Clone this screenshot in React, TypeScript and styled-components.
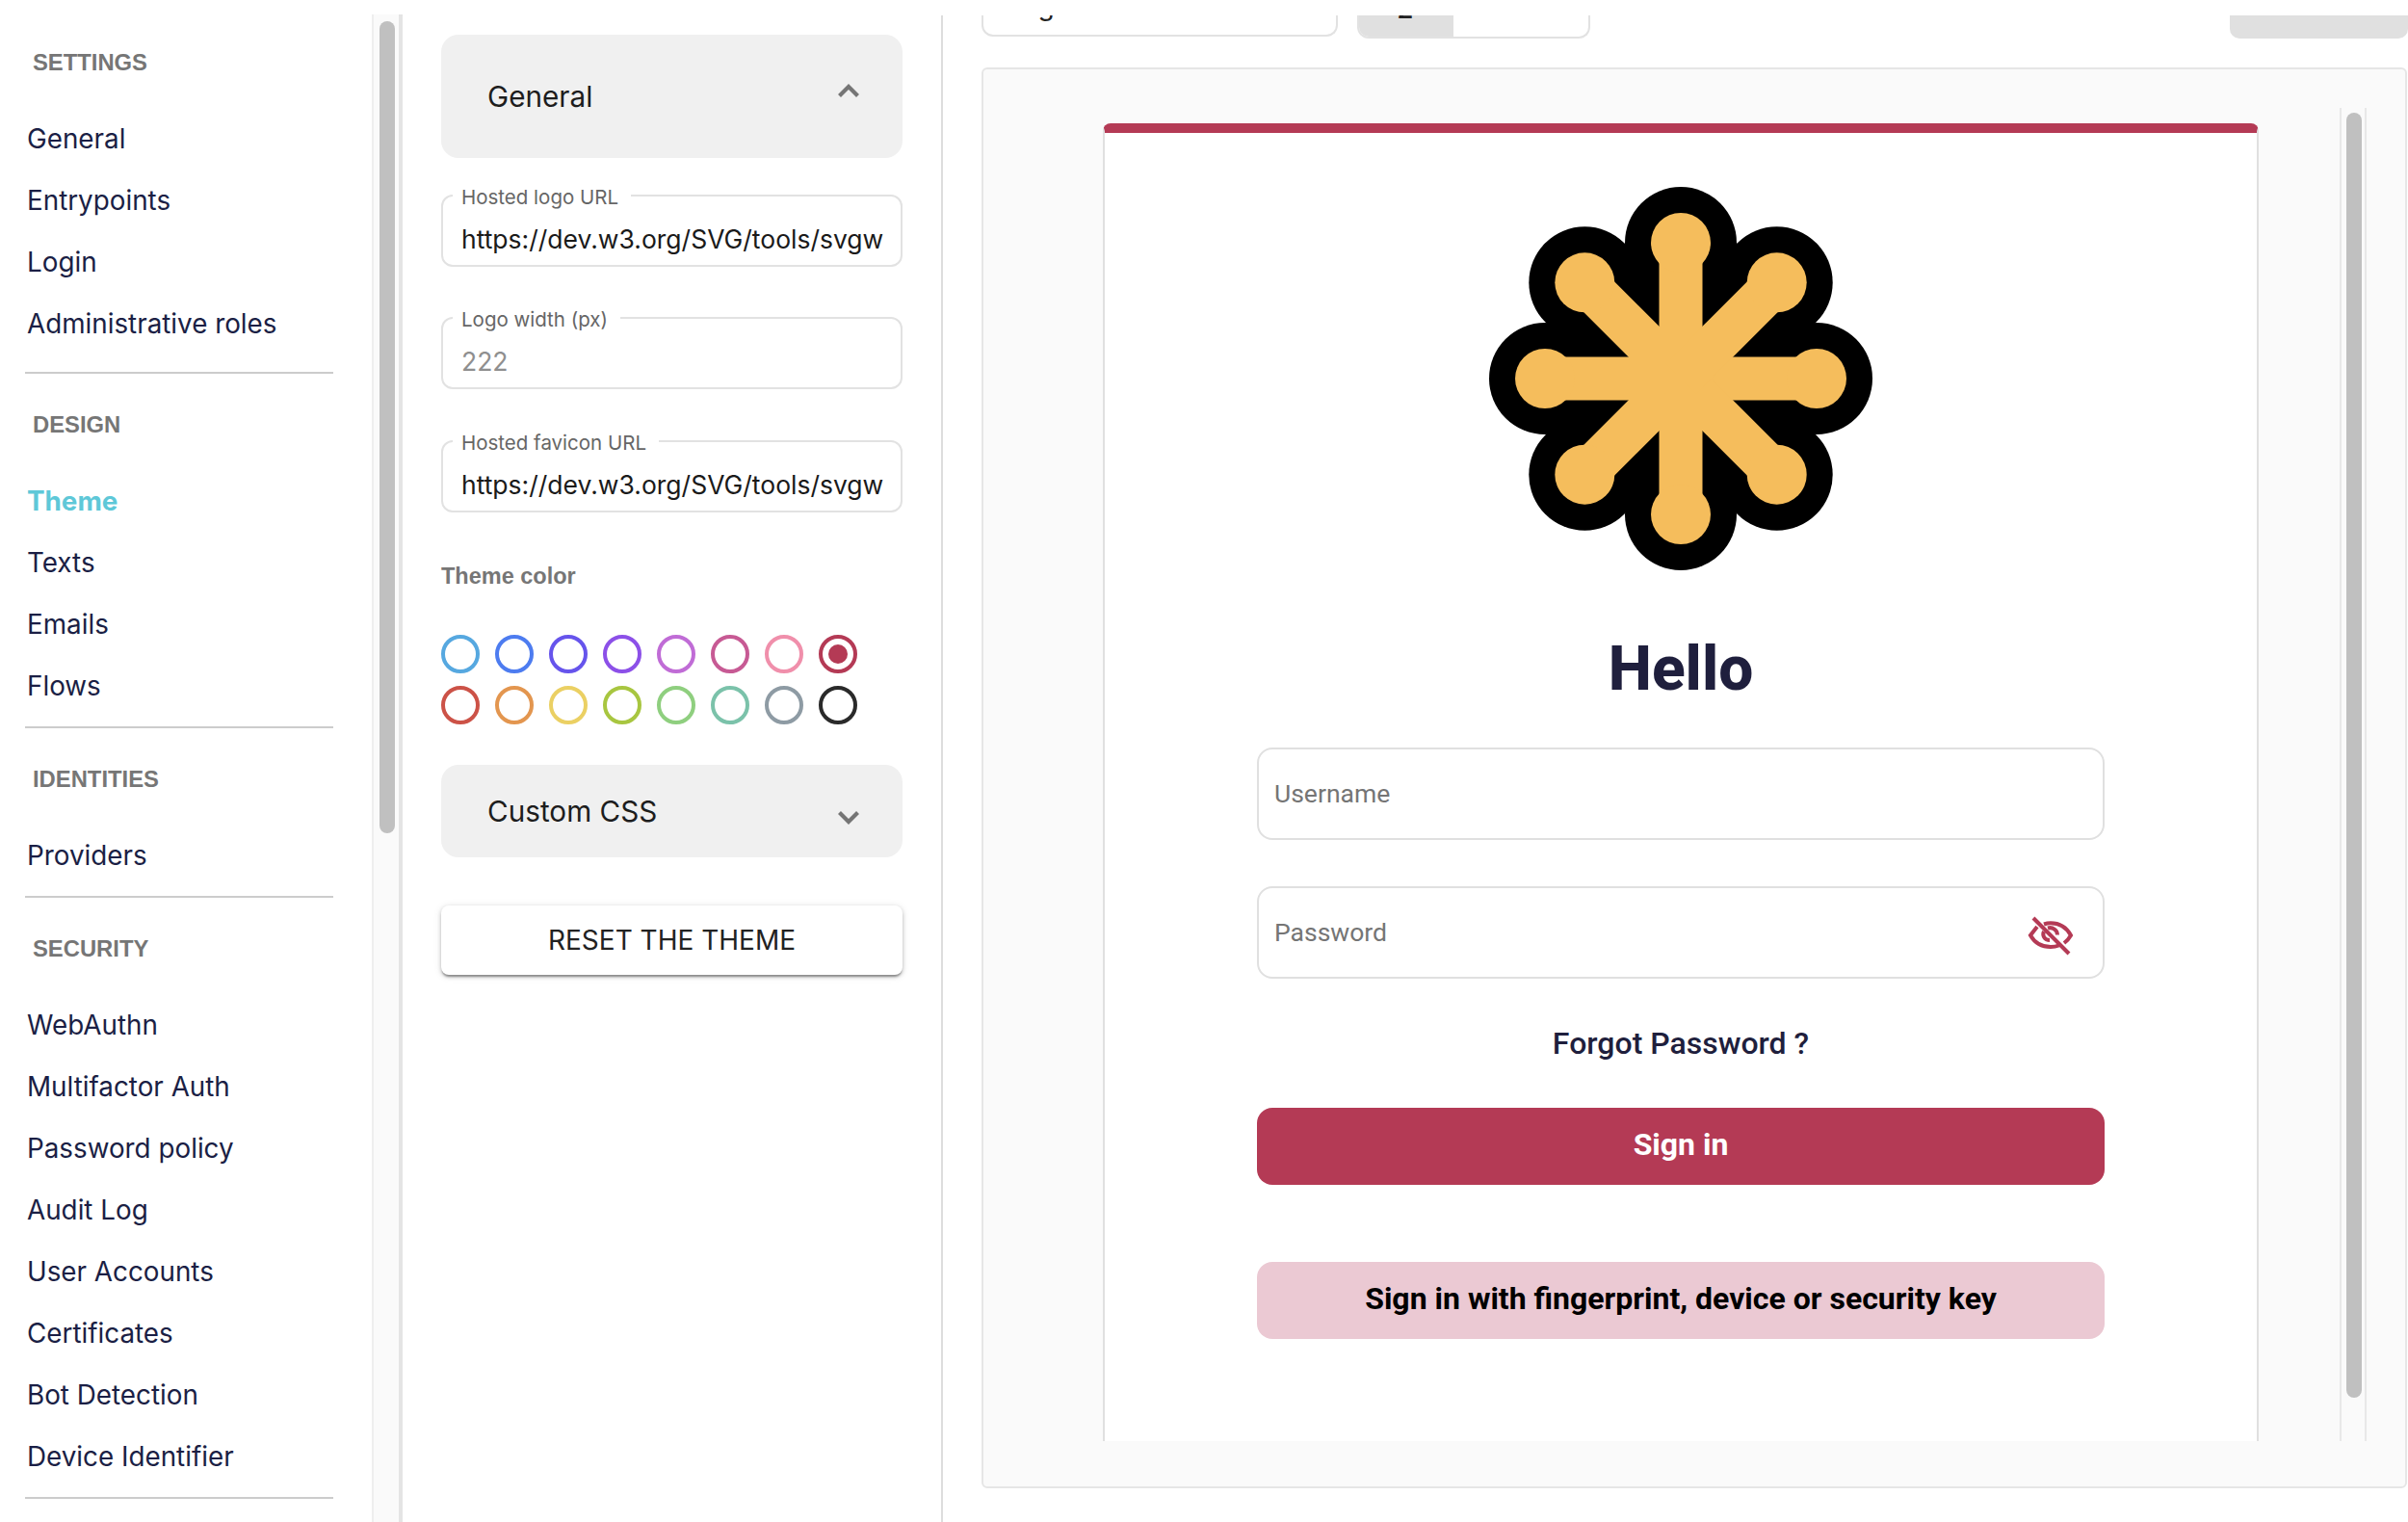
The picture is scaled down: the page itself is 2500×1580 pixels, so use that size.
import React from "react";
import styled, { createGlobalStyle } from "styled-components";

const Global = createGlobalStyle`
  html, body { margin: 0; padding: 0; background: #fff; }
  body { font-family: Inter, "Liberation Sans", sans-serif; }
  * { box-sizing: border-box; }
`;

const Page = styled.div`
  width: 2500px;
  height: 1580px;
  display: flex;
  overflow: hidden;
  background: #fff;
`;

const Sidebar = styled.aside`
  width: 418px;
  flex: none;
  display: flex;
`;

const Nav = styled.nav`
  width: 386px;
  flex: none;
  padding: 12px 40px 0 26px;
`;

const Section = styled.section<{ $pb: number }>`
  padding-bottom: ${(p) => p.$pb}px;
  border-bottom: 2px solid #ccc;
`;

const SectionTitle = styled.h3`
  margin: 33px 0 27px 8px;
  height: 40px;
  line-height: 40px;
  font-family: "Liberation Sans", Arial, sans-serif;
  font-weight: 700;
  font-size: 23.8px;
  color: #767676;
`;

const NavItem = styled.a<{ $active?: boolean }>`
  display: block;
  height: 64px;
  line-height: 64px;
  margin-left: 2px;
  font-size: 27.8px;
  font-weight: ${(p) => (p.$active ? 700 : 400)};
  color: ${(p) => (p.$active ? "#5ec8d8" : "#1b1f45")};
  white-space: nowrap;
`;

const Rail = styled.div`
  width: 32px;
  margin-top: 15px;
  flex: none;
  background: #fafafa;
  border-left: 2px solid #eee;
  border-right: 4px solid #e4e4e4;
  padding: 7px 0 0 6px;
`;

const RailThumb = styled.div`
  width: 16px;
  height: 843px;
  border-radius: 8px;
  background: #c0c0c0;
`;

const Controls = styled.div`
  width: 561px;
  flex: none;
  margin-top: 16px;
  padding: 20px 40px 0 40px;
  border-right: 2px solid #ddd;
  display: flex;
  flex-direction: column;
  align-items: stretch;
`;

const Accordion = styled.div<{ $h: number; $top?: number }>`
  height: ${(p) => p.$h}px;
  margin-top: ${(p) => p.$top ?? 0}px;
  flex: none;
  padding: 0 44px 0 48px;
  border-radius: 18px;
  background: #f0f0f0;
  display: flex;
  align-items: center;
  justify-content: space-between;
`;

const AccordionTitle = styled.span`
  font-size: 29.7px;
  color: #1d1d1d;
`;

const Chevron = styled.svg<{ $shift: number }>`
  width: 24px;
  height: 16px;
  transform: translateY(${(p) => p.$shift}px);
`;

const Field = styled.div<{ $top: number }>`
  position: relative;
  height: 75px;
  margin-top: ${(p) => p.$top}px;
  flex: none;
  padding: 0 10px 10px 19px;
  border: 2px solid #e2e2e2;
  border-radius: 12px;
  display: flex;
  align-items: flex-end;
`;

const FieldLabel = styled.label`
  position: absolute;
  top: -13px;
  left: 10px;
  padding: 0 13px 0 9px;
  background: #fff;
  font-size: 20.5px;
  line-height: 28px;
  color: #666;
  white-space: nowrap;
`;

const FieldValue = styled.div<{ $muted?: boolean }>`
  height: 34px;
  line-height: 34px;
  white-space: nowrap;
  font-size: 26.5px;
  color: ${(p) => (p.$muted ? "#8f8f8f" : "#1a1a1a")};
`;

const ThemeLabel = styled.div`
  margin-top: 51px;
  height: 30px;
  line-height: 30px;
  font-family: "Liberation Sans", Arial, sans-serif;
  font-size: 23.5px;
  font-weight: 700;
  color: #767676;
`;

const Swatches = styled.div`
  margin-top: 46px;
  display: grid;
  grid-template-columns: repeat(8, 40px);
  column-gap: 16px;
  row-gap: 13px;
`;

const Swatch = styled.span<{ $color: string }>`
  width: 40px;
  height: 40px;
  border: 4px solid ${(p) => p.$color};
  border-radius: 50%;
  display: flex;
  align-items: center;
  justify-content: center;
`;

const SwatchDot = styled.span<{ $color: string }>`
  width: 20px;
  height: 20px;
  border-radius: 50%;
  background: ${(p) => p.$color};
`;

const ResetButton = styled.button`
  margin-top: 50px;
  height: 72px;
  flex: none;
  border: 0;
  border-radius: 8px;
  background: #fff;
  font-family: inherit;
  font-size: 28px;
  color: #222;
  box-shadow: 0 3px 2px -1px rgba(0, 0, 0, 0.32), 0 2px 4px rgba(0, 0, 0, 0.2), 0 1px 8px rgba(0, 0, 0, 0.1);
`;

const Main = styled.main`
  flex: 1;
  min-width: 0;
  padding-left: 40px;
  display: flex;
  flex-direction: column;
`;

const Toolbar = styled.div`
  margin-top: 16px;
  height: 24px;
  flex: none;
  display: flex;
  align-items: flex-start;
`;

const SelectStub = styled.div`
  width: 370px;
  height: 22px;
  overflow: hidden;
  border: 2px solid #e2e2e2;
  border-top: 0;
  border-radius: 0 0 12px 12px;
  padding-left: 24px;
  font-size: 28px;
  line-height: 36px;
  color: #222;
`;

const ClippedText = styled.div<{ $lift: number }>`
  margin-top: -${(p) => p.$lift}px;
`;

const ToggleStub = styled.div`
  width: 242px;
  height: 24px;
  margin-left: 20px;
  display: flex;
  overflow: hidden;
  border: 2px solid #e2e2e2;
  border-top: 0;
  border-radius: 0 0 12px 12px;
`;

const ToggleOn = styled.div`
  width: 100px;
  height: 24px;
  margin-left: -2px;
  background: #e0e0e0;
  text-align: center;
  font-size: 28px;
  font-weight: 500;
  line-height: 36px;
  color: #222;
`;

const Spacer = styled.div`
  flex: 1;
`;

const RightStub = styled.div`
  width: 185px;
  height: 24px;
  border-radius: 0 0 10px 10px;
  background: #e0e0e0;
`;

const Preview = styled.div`
  margin-top: 30px;
  height: 1475px;
  flex: none;
  margin-right: 1px;
  padding: 40px 0 0 124px;
  border: 2px solid #e6e6e6;
  border-radius: 6px;
  background: #fafafa;
`;

const PreviewBody = styled.div`
  height: 1384px;
  overflow: hidden;
  display: flex;
  align-items: flex-start;
`;

const Card = styled.div`
  width: 1200px;
  height: 1368px;
  margin-top: 16px;
  flex: none;
  border-top: 10px solid #b43a55;
  border-left: 2px solid #e0e0e0;
  border-right: 2px solid #e0e0e0;
  border-radius: 8px 8px 0 0;
  background: #fff;
  display: flex;
  flex-direction: column;
  align-items: center;
`;

const Logo = styled.svg`
  width: 400px;
  height: 400px;
  margin-top: 55px;
  flex: none;
`;

const Hello = styled.h1`
  margin: 62px 0 0;
  height: 80px;
  line-height: 80px;
  font-family: Roboto, sans-serif;
  font-size: 64px;
  font-weight: 800;
  color: #1f1f3d;
`;

const LoginInput = styled.div<{ $top: number }>`
  width: 880px;
  height: 96px;
  margin-top: ${(p) => p.$top}px;
  flex: none;
  padding: 0 30px 2px 16px;
  border: 2px solid #e0e0e0;
  border-radius: 16px;
  display: flex;
  align-items: center;
  justify-content: space-between;
  font-family: Roboto, sans-serif;
  font-size: 26.5px;
  color: #757575;
`;

const EyeIcon = styled.svg`
  width: 48px;
  height: 42px;
  flex: none;
  margin-top: 8px;
`;

const Forgot = styled.div`
  margin-top: 47px;
  height: 40px;
  line-height: 40px;
  font-family: Roboto, sans-serif;
  font-size: 32px;
  font-weight: 500;
  color: #1f1f3d;
`;

const LoginButton = styled.button<{ $bg: string; $fg: string; $top: number }>`
  width: 880px;
  height: 80px;
  margin-top: ${(p) => p.$top}px;
  flex: none;
  border: 0;
  padding: 0 0 4px;
  border-radius: 16px;
  background: ${(p) => p.$bg};
  color: ${(p) => p.$fg};
  font-family: Roboto, sans-serif;
  font-size: 32px;
  font-weight: 700;
`;

const InnerRail = styled.div`
  width: 28px;
  height: 1384px;
  margin-left: 84px;
  flex: none;
  padding: 5px 0 0 5px;
  border-left: 2px solid #e8e8e8;
  border-right: 2px solid #e8e8e8;
`;

const InnerThumb = styled.div`
  width: 16px;
  height: 1334px;
  border-radius: 8px;
  background: #c0c0c0;
`;

const sections = [
  { title: "SETTINGS", pb: 18, items: ["General", "Entrypoints", "Login", "Administrative roles"] },
  { title: "DESIGN", pb: 10, items: ["Theme", "Texts", "Emails", "Flows"] },
  { title: "IDENTITIES", pb: 10, items: ["Providers"] },
  {
    title: "SECURITY",
    pb: 10,
    items: ["WebAuthn", "Multifactor Auth", "Password policy", "Audit Log", "User Accounts", "Certificates", "Bot Detection", "Device Identifier"],
  },
];

const swatches = [
  "#56a8e0", "#4d7cf0", "#6654ec", "#8c50e8", "#c06cd6", "#c75a94", "#f08fab", "#b43a55",
  "#cc5247", "#e3964f", "#ebd063", "#a8c640", "#8fcf7f", "#7bc2aa", "#8e9ba4", "#2a2a2a",
];

const spokes = [0, 45, 90, 135, 180, 225, 270, 315].map((a) => ({
  x: 200 + 141 * Math.cos((a * Math.PI) / 180),
  y: 200 + 141 * Math.sin((a * Math.PI) / 180),
}));

const Up = () => (
  <Chevron $shift={-6} viewBox="0 0 24 16">
    <path d="M2.5 13.5 12 4l9.500 9.500" fill="none" stroke="#757575" strokeWidth="4.200" />
  </Chevron>
);

const Down = () => (
  <Chevron $shift={7} viewBox="0 0 24 16">
    <path d="M2.500 2.500 12 12l9.500-9.500" fill="none" stroke="#757575" strokeWidth="4.200" />
  </Chevron>
);

export default function App() {
  return (
    <Page>
      <Global />
      <Sidebar>
        <Nav>
          {sections.map((s) => (
            <Section key={s.title} $pb={s.pb}>
              <SectionTitle>{s.title}</SectionTitle>
              {s.items.map((i) => (
                <NavItem key={i} $active={i === "Theme"}>
                  {i}
                </NavItem>
              ))}
            </Section>
          ))}
        </Nav>
        <Rail>
          <RailThumb />
        </Rail>
      </Sidebar>

      <Controls>
        <Accordion $h={128}>
          <AccordionTitle>General</AccordionTitle>
          <Up />
        </Accordion>
        <Field $top={38}>
          <FieldLabel>Hosted logo URL</FieldLabel>
          <FieldValue>https://dev.w3.org/SVG/tools/svgw</FieldValue>
        </Field>
        <Field $top={52}>
          <FieldLabel>Logo width (px)</FieldLabel>
          <FieldValue $muted>222</FieldValue>
        </Field>
        <Field $top={53}>
          <FieldLabel>Hosted favicon URL</FieldLabel>
          <FieldValue>https://dev.w3.org/SVG/tools/svgw</FieldValue>
        </Field>
        <ThemeLabel>Theme color</ThemeLabel>
        <Swatches>
          {swatches.map((c, i) => (
            <Swatch key={c} $color={c}>
              {i === 7 && <SwatchDot $color={c} />}
            </Swatch>
          ))}
        </Swatches>
        <Accordion $h={96} $top={42}>
          <AccordionTitle>Custom CSS</AccordionTitle>
          <Down />
        </Accordion>
        <ResetButton>RESET THE THEME</ResetButton>
      </Controls>

      <Main>
        <Toolbar>
          <SelectStub>
            <ClippedText $lift={28}>Login</ClippedText>
          </SelectStub>
          <ToggleStub>
            <ToggleOn>
              <ClippedText $lift={25}>2</ClippedText>
            </ToggleOn>
          </ToggleStub>
          <Spacer />
          <RightStub />
        </Toolbar>
        <Preview>
          <PreviewBody>
            <Card>
              <Logo viewBox="0 0 400 400">
                <polygon points={spokes.map((p) => `${p.x},${p.y}`).join(" ")} fill="#000" />
                {spokes.map((p, i) => (
                  <circle key={i} cx={p.x} cy={p.y} r="58" fill="#000" />
                ))}
                {spokes.map((p, i) => (
                  <line key={i} x1="200" y1="200" x2={p.x} y2={p.y} stroke="#f5bd5c" strokeWidth="45" />
                ))}
                {spokes.map((p, i) => (
                  <circle key={i} cx={p.x} cy={p.y} r="31" fill="#f5bd5c" />
                ))}
              </Logo>
              <Hello>Hello</Hello>
              <LoginInput $top={41}>Username</LoginInput>
              <LoginInput $top={48}>
                Password
                <EyeIcon viewBox="0 0 48 42">
                  <g fill="none" stroke="#b43a55" strokeWidth="4">
                    <path d="M10 12 3 21c4 7 11 12 21 12 3 0 6-.5 8.500-1.500" />
                    <path d="M17 9.500c2-.7 4.500-1.200 7-1.200 10 0 17 5.500 21 12.700-1.700 3-4 5.700-7 8" />
                    <path d="M17 17c-2 4 .5 9 6 9" />
                    <path d="M21 13.500c5-1.500 10 2 10 7" />
                    <path d="M6 3l37 37" />
                  </g>
                </EyeIcon>
              </LoginInput>
              <Forgot>Forgot Password ?</Forgot>
              <LoginButton $bg="#b43a55" $fg="#fff" $top={47}>
                Sign in
              </LoginButton>
              <LoginButton $bg="#ebc9d3" $fg="#000" $top={80}>
                Sign in with fingerprint, device or security key
              </LoginButton>
            </Card>
            <InnerRail>
              <InnerThumb />
            </InnerRail>
          </PreviewBody>
        </Preview>
      </Main>
    </Page>
  );
}
